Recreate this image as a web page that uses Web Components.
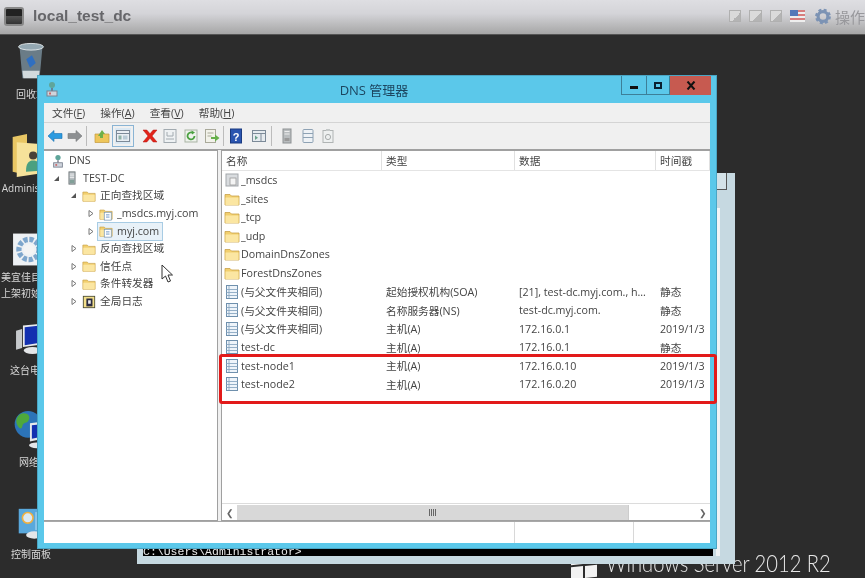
<!DOCTYPE html>
<html lang="zh-CN">
<head>
<meta charset="utf-8">
<title>local_test_dc</title>
<style>
  html, body {
    margin: 0;
    width: 865px;
    height: 578px;
    overflow: hidden;
    background: #2c2c2c;
  }
</style>
</head>
<body>
<vm-console>
  <vm-topbar slot="top" label="local_test_dc"></vm-topbar>

  <desk-icon style="left:1px;top:7px" icon="trash" h="42" label="回收站"></desk-icon>
  <desk-icon style="left:-3px;top:98px" icon="deskfolder" h="45" label="Administrator" shift="7"></desk-icon>
  <desk-icon style="left:-1px;top:197px" icon="gearbox" h="35" label="美宜佳目录&#10;上架初始化" shift="-3"></desk-icon>
  <desk-icon style="left:-1px;top:287px" icon="pc" h="38" label="这台电脑" shift="1"></desk-icon>
  <desk-icon style="left:-1px;top:375px" icon="globe" h="42" label="网络"></desk-icon>
  <desk-icon style="left:1px;top:473px" icon="panel" h="36" label="控制面板"></desk-icon>

  <server-brand></server-brand>
  <cmd-window></cmd-window>

  <dns-window>
    <dns-tree slot="tree">
      <tree-row level="0" arrow="none" icon="dns" label="DNS"></tree-row>
      <tree-row level="1" arrow="open" icon="server" label="TEST-DC"></tree-row>
      <tree-row level="2" arrow="open" icon="folder" label="正向查找区域"></tree-row>
      <tree-row level="3" arrow="closed" icon="zone" label="_msdcs.myj.com"></tree-row>
      <tree-row level="3" arrow="closed" icon="zone" label="myj.com" selected></tree-row>
      <tree-row level="2" arrow="closed" icon="folder" label="反向查找区域"></tree-row>
      <tree-row level="2" arrow="closed" icon="folder" label="信任点"></tree-row>
      <tree-row level="2" arrow="closed" icon="folder" label="条件转发器"></tree-row>
      <tree-row level="2" arrow="closed" icon="log" label="全局日志"></tree-row>
    </dns-tree>
    <record-list slot="list">
      <record-row icon="zonegray" name="_msdcs"></record-row>
      <record-row icon="folder" name="_sites"></record-row>
      <record-row icon="folder" name="_tcp"></record-row>
      <record-row icon="folder" name="_udp"></record-row>
      <record-row icon="folder" name="DomainDnsZones"></record-row>
      <record-row icon="folder" name="ForestDnsZones"></record-row>
      <record-row icon="record" name="(与父文件夹相同)" type="起始授权机构(SOA)" data="[21], test-dc.myj.com., h..." time="静态"></record-row>
      <record-row icon="record" name="(与父文件夹相同)" type="名称服务器(NS)" data="test-dc.myj.com." time="静态"></record-row>
      <record-row icon="record" name="(与父文件夹相同)" type="主机(A)" data="172.16.0.1" time="2019/1/3"></record-row>
      <record-row icon="record" name="test-dc" type="主机(A)" data="172.16.0.1" time="静态"></record-row>
      <record-row icon="record" name="test-node1" type="主机(A)" data="172.16.0.10" time="2019/1/3"></record-row>
      <record-row icon="record" name="test-node2" type="主机(A)" data="172.16.0.20" time="2019/1/3"></record-row>
    </record-list>
  </dns-window>

  <mark-box></mark-box>
  <mouse-cursor></mouse-cursor>
</vm-console>

<script>
  const FONT = '"Open Sans", "Noto Sans CJK SC", sans-serif'

  const FOLDER = `<path d="M1 3.5h5l1.5 1.5H15v9H1z" fill="#f2cf6e" stroke="#c9a24a" stroke-width=".8"/><path d="M1.5 6.5h13V14h-13z" fill="#fbe6a2"/>`
  const RECORD = `<rect x="2.5" y="1.5" width="11" height="13" fill="#eef4fa" stroke="#6f90ad"/><path d="M2.5 5.5h11M2.5 8.5h11M2.5 11.5h11M5 2v12" stroke="#8aa8c2" stroke-width=".9"/>`

  // 16x16 아이콘 모음
  const ICONS = {
    folder: FOLDER,
    record: RECORD,
    zone: `${FOLDER}<rect x="6" y="6" width="8" height="9" fill="#fff" stroke="#6f8fb0" stroke-width=".8"/><path d="M8 9h4M8 11.5h4" stroke="#5b8ac0"/>`,
    zonegray: `<rect x="2" y="2" width="12" height="12" fill="#d9dcdf" stroke="#a3a7ab"/><rect x="6" y="6" width="6" height="7" fill="#f4f4f4" stroke="#9a9a9a" stroke-width=".8"/>`,
    dns: `<circle cx="8" cy="4" r="3" fill="#5fa59a"/><path d="M8 7v3" stroke="#667" stroke-width="1.4"/><rect x="3" y="10" width="10" height="5" fill="#cfd4dc" stroke="#7a8290"/><rect x="5" y="11.5" width="2" height="2" fill="#c66"/>`,
    server: `<rect x="4.5" y="1" width="7" height="14" fill="#b6bcc0" stroke="#6e7678"/><path d="M5.5 3.5h5M5.5 5.5h5M5.5 7.5h5" stroke="#eef0f0"/><rect x="5.5" y="10" width="5" height="4" fill="#82a098"/>`,
    log: `<rect x="1.5" y="1.5" width="13" height="13" fill="#f4e08a" stroke="#4a4a30"/><rect x="5" y="4" width="7" height="9" fill="#2c2c40"/><rect x="7" y="6" width="3" height="4" fill="#eee"/>`,
    back: `<path d="M1 8l6-5.5V5.5h8v5H7v3z" fill="#2c9be0" stroke="#1a70b0" stroke-width=".6"/>`,
    forward: `<path d="M15 8L9 2.5V5.5H1v5h8v3z" fill="#8d9092" stroke="#77797b" stroke-width=".6"/>`,
    up: `<path d="M1 6h14v8.5H1z" fill="#eec65a" stroke="#c49a3c" stroke-width=".7"/><path d="M4 8l4-6 3 4H9v4H6V8z" fill="#6fb04a"/>`,
    pane: `<rect x="1.5" y="2.5" width="13" height="11" fill="#e9eef3" stroke="#7c8a98"/><path d="M1.5 5.5h13" stroke="#7c8a98"/><rect x="3.5" y="7.5" width="3" height="4" fill="#8fb2a8"/><rect x="8" y="7.5" width="4.5" height="4" fill="#b9cbd6"/>`,
    del: `<path d="M1 2h3.8L8 5.8 11.2 2H15l-5 6 5 6h-3.8L8 10.2 4.8 14H1l5-6z" fill="#e2231a" stroke="#b41610" stroke-width=".5"/>`,
    props: `<rect x="2" y="1.5" width="12" height="13" fill="#eef1f3" stroke="#a2aab0"/><path d="M5 4v4h6V4M4 11h8" stroke="#a2aab0" fill="none"/>`,
    refresh: `<rect x="2" y="2" width="12" height="12" fill="#eef2ec" stroke="#a9b3a4"/><path d="M11.5 8A3.5 3.5 0 1 1 9.5 4.8" fill="none" stroke="#4aa040" stroke-width="1.8"/><path d="M8.5 2.5l3.5 2-3 2z" fill="#4aa040"/>`,
    exportlist: `<rect x="1.5" y="1.5" width="10" height="13" fill="#f2f2ea" stroke="#a9a99a"/><path d="M3.5 5h6M3.5 8h4" stroke="#a9a99a"/><path d="M7 9h4V6.5L15.5 10 11 13.5V11H7z" fill="#66b04a"/>`,
    help: `<rect x="2.5" y="1" width="11" height="14" fill="#2b55b0" stroke="#1a3a80"/><text x="8" y="12.5" font-size="11" font-weight="700" font-family="Liberation Sans" fill="#fff" text-anchor="middle">?</text>`,
    panel2: `<rect x="1.5" y="2.5" width="13" height="11" fill="#e6ebef" stroke="#7c8a98"/><path d="M1.5 5.5h13M10 5.5v8" stroke="#7c8a98"/><path d="M4 7.5l3 2.2-3 2.2z" fill="#6aa08a"/>`,
    srvgray: `<rect x="4" y="1" width="8" height="14" fill="#b9bdbf" stroke="#8d9193"/><path d="M5.5 3.5h5M5.5 6h5" stroke="#eee"/><rect x="5.5" y="10" width="5" height="3" fill="#999"/>`,
    listgray: `<rect x="3" y="1.5" width="10" height="13" rx="1" fill="#eef2f6" stroke="#8ea2b4"/><path d="M3 5.5h10M3 9.5h10" stroke="#8ea2b4"/>`,
    docgray: `<rect x="3" y="2.5" width="10" height="12" fill="#eef0f0" stroke="#b0b4b4"/><circle cx="8" cy="9" r="2.6" fill="none" stroke="#a8acac"/><path d="M6 1h4v2H6z" fill="#c4c8c8"/>`,
    trash: `<path d="M4 5h24l-3 33H7z" fill="#7f97a6" opacity=".75"/><ellipse cx="16" cy="5" rx="13" ry="3.5" fill="#94a8b2" stroke="#dde4e6"/><path d="M11 18l6-4 4 8-6 5z" fill="#2f6fc0"/><path d="M7 30h18l-1 8H8z" fill="#d2dadd"/>`,
    deskfolder: `<path d="M2 4l14-3v40L2 38z" fill="#e8c664"/><path d="M6 9l26 2v28L6 43z" fill="#f6e29a"/><circle cx="22" cy="22" r="4" fill="#4a4038"/><path d="M15 38c0-9 3-11 7-11s7 2 7 10z" fill="#4aa080"/>`,
    gearbox: `<rect x="1" y="1" width="30" height="30" fill="#eef1f4"/><circle cx="16" cy="16" r="9.5" fill="none" stroke="#7ea6cc" stroke-width="5" stroke-dasharray="4 1.6"/><circle cx="16" cy="16" r="5" fill="#f4f4f4"/>`,
    pc: `<path d="M1 10l7-2v22l-7 2z" fill="#c6c9cc"/><path d="M9 4l22-2v24l-22 3z" fill="#e8eaec"/><path d="M11 6l18-2v20l-18 3z" fill="#1330b0"/><ellipse cx="20" cy="33" rx="10" ry="4" fill="#e4e6e8"/>`,
    globe: `<circle cx="15" cy="15" r="14" fill="#2c74b8"/><path d="M6 5c6-4 12 0 10 5s-6 2-7 7-5 1-6-3 1-7 3-9z" fill="#4ea83c"/><path d="M17 20l7-5 5 3-3 8-7 1z" fill="#58b048"/><path d="M17 14l14-2v18l-14 3z" fill="#e6e8ea"/><path d="M19 16l10-1v13l-10 2z" fill="#1330b0"/><ellipse cx="24" cy="37" rx="8" ry="3" fill="#e4e6e8"/>`,
    panel: `<rect x="1" y="1" width="30" height="30" fill="#59a8dc"/><circle cx="12" cy="12" r="6.5" fill="#dbe9f4" stroke="#f0b040" stroke-width="2"/><rect x="21" y="5" width="8" height="22" fill="#8cc4ea"/><ellipse cx="20" cy="33" rx="10" ry="4.5" fill="#e4e6e8"/>`
  }

  const icon = (name, w = 16, h = 16) => {
    const box = /trash|deskfolder|pc|globe|panel$/.test(name) ? '0 0 32 44' : name === 'gearbox' ? '0 0 32 32' : '0 0 16 16'
    return `<svg width="${w}" height="${h}" viewBox="${box}" preserveAspectRatio="xMidYMid meet">${ICONS[name]}</svg>`
  }

  class VmConsole extends HTMLElement {
    constructor() {
      super()
      this.attachShadow({ mode: 'open' })
      this.shadowRoot.innerHTML = `
        <style>
          :host {
            display: flex;
            flex-direction: column;
            width: 865px;
            height: 578px;
            font-family: ${FONT};
            overflow: hidden;
          }
          .desk {
            position: relative;
            flex: 1;
            background: #2c2c2c;
            filter: blur(.45px);
          }
        </style>
        <slot name="top"></slot>
        <div class="desk"><slot></slot></div>
      `
    }
  }

  class VmTopbar extends HTMLElement {
    constructor() {
      super()
      this.attachShadow({ mode: 'open' })
      this.shadowRoot.innerHTML = `
        <style>
          :host {
            display: flex;
            align-items: center;
            height: 35px;
            box-sizing: border-box;
            padding: 0 0 2px 4px;
            background: linear-gradient(#dedee2, #d4d4d8 40%, #a6a6a6);
            border-bottom: 1px solid #555;
            filter: blur(.5px);
          }
          .logo {
            width: 20px;
            height: 19px;
            box-sizing: border-box;
            background: linear-gradient(#222 45%, #555 45%, #333);
            border: 2px solid #888;
            border-radius: 3px;
          }
          .name {
            margin-left: 9px;
            font: 700 15.5px "Liberation Sans", sans-serif;
            color: #66666a;
          }
          .right {
            margin-left: auto;
            display: flex;
            align-items: center;
            white-space: nowrap;
            width: 136px;
            overflow: hidden;
          }
          .win {
            width: 13px;
            height: 12px;
            box-sizing: border-box;
            border: 1px solid #b0b0b0;
            background: linear-gradient(135deg, #dadada 60%, #b4b4b4 60%);
            margin-right: 8px;
          }
          .flag {
            width: 16px;
            height: 12px;
            margin-right: 10px;
            background: repeating-linear-gradient(#d67d7d 0 2px, #eee 2px 4px);
            position: relative;
          }
          .flag::before {
            content: '';
            position: absolute;
            left: 0;
            top: 0;
            width: 8px;
            height: 6px;
            background: #5578b8;
          }
          .txt {
            margin-left: 4px;
            font: 15px "Noto Sans CJK SC", sans-serif;
            color: #98989c;
          }
        </style>
        <div class="logo"></div>
        <div class="name">${this.getAttribute('label')}</div>
        <div class="right">
          <div class="win"></div>
          <div class="win"></div>
          <div class="win"></div>
          <div class="flag"></div>
          <svg width="17" height="17" viewBox="0 0 17 17">
            <circle cx="8.5" cy="8.5" r="5.2" fill="none" stroke="#7c93b4" stroke-width="3.4"/>
            <circle cx="8.5" cy="8.5" r="6.9" fill="none" stroke="#7c93b4" stroke-width="3" stroke-dasharray="3 2.4"/>
          </svg>
          <div class="txt">操作</div>
        </div>
      `
    }
  }

  class DeskIcon extends HTMLElement {
    constructor() {
      super()
      this.attachShadow({ mode: 'open' })
      this.shadowRoot.innerHTML = `
        <style>
          :host {
            position: absolute;
            display: flex;
            flex-direction: column;
            align-items: center;
            width: 60px;
            color: #d8d8d8;
          }
          svg { margin-bottom: 2px; }
          .label {
            font-size: 10px;
            line-height: 16px;
            text-align: center;
            white-space: pre;
            transform: translateX(${this.getAttribute('shift') || 0}px);
          }
        </style>
        ${icon(this.getAttribute('icon'), 34, Number(this.getAttribute('h')))}
        <div class="label">${this.getAttribute('label')}</div>
      `
    }
  }

  class ServerBrand extends HTMLElement {
    constructor() {
      super()
      this.attachShadow({ mode: 'open' })
      this.shadowRoot.innerHTML = `
        <style>
          :host {
            position: absolute;
            left: 571px;
            top: 517px;
            display: flex;
            align-items: flex-start;
            gap: 9px;
            color: #e8e8e8;
            white-space: nowrap;
          }
          .flag {
            display: grid;
            grid-template-columns: 12px 12px;
            gap: 2px;
            transform: skewY(-6deg);
          }
          .flag i { height: 12px; background: #f2f2f2; }
          .txt {
            margin-top: -4px;
            font: 300 24px Lato, sans-serif;
            transform: scaleX(.84);
            transform-origin: left;
          }
        </style>
        <div class="flag"><i></i><i></i><i></i><i></i></div>
        <div class="txt">Windows Server 2012 R2</div>
      `
    }
  }

  class CmdWindow extends HTMLElement {
    constructor() {
      super()
      this.attachShadow({ mode: 'open' })
      this.shadowRoot.innerHTML = `
        <style>
          :host {
            position: absolute;
            left: 137px;
            top: 138px;
            width: 598px;
            height: 391px;
            box-sizing: border-box;
            display: flex;
            padding: 6px 0 8px 6px;
            background: #c6d9e1;
          }
          .screen {
            flex: 1;
            display: flex;
            align-items: flex-end;
            background: #000;
            color: #e8e8e8;
            font: 11.5px/8px "Liberation Mono", monospace;
            overflow: hidden;
            white-space: nowrap;
          }
          .bar {
            position: relative;
            width: 22px;
            background: #c6d9e1;
          }
          .bar i {
            position: absolute;
            left: 3px;
            top: -6px;
            width: 11px;
            height: 17px;
            box-sizing: border-box;
            border: 1px solid #555;
            border-top: 0;
            background: #d4e2e8;
          }
          .bar b {
            position: absolute;
            left: 3px;
            right: 15px;
            bottom: 0;
            height: 348px;
            background: linear-gradient(#f4f6f7 0, #eef2f4 100%);
          }
        </style>
        <div class="screen"><span>C:\\Users\\Administrator&gt;</span></div>
        <div class="bar"><i></i><b></b></div>
      `
    }
  }

  class DnsWindow extends HTMLElement {
    constructor() {
      super()
      this.attachShadow({ mode: 'open' })
      // [아이콘, 오른쪽 여백]
      const tools = [
        ['back', 4], ['forward', 3], ['|', 7], ['up', 5], ['pane', 11, 1], ['del', 4], ['props', 5], ['refresh', 5], ['exportlist', 3], ['|', 4],
        ['help', 7], ['panel2', 4], ['|', 7], ['srvgray', 5], ['listgray', 4], ['docgray', 0]
      ]
      const bar = tools.map(t => t[0] === '|'
        ? `<i class="sep" style="margin-right:${t[1]}px"></i>`
        : `<span class="tool${t[2] ? ' on' : ''}" style="margin-right:${t[1]}px">${icon(t[0])}</span>`).join('')
      this.shadowRoot.innerHTML = `
        <style>
          :host {
            position: absolute;
            left: 38px;
            top: 41px;
            width: 678px;
            height: 472px;
            box-sizing: border-box;
            display: flex;
            flex-direction: column;
            padding: 0 6px 5px;
            background: #5bc8ea;
            box-shadow: 0 0 0 1px #4aa5c4;
            color: #444;
            font-size: 10.7px;
          }
          .title {
            position: relative;
            height: 27px;
            flex: none;
            display: flex;
            align-items: center;
            justify-content: center;
            padding-right: 6px;
            font-size: 13px;
            color: #1c4660;
          }
          .title svg {
            position: absolute;
            left: 0;
            top: 5px;
          }
          .ctrls {
            position: absolute;
            right: -1px;
            top: 0;
            height: 19px;
            display: flex;
            color: #111;
          }
          .ctrls div {
            display: flex;
            align-items: center;
            justify-content: center;
            box-sizing: border-box;
            border: 1px solid #3d7f98;
            border-top: 0;
            border-left-width: 1px;
          }
          .min { width: 26px; }
          .max { width: 23px; border-left: 0 !important; }
          .close { width: 41px; background: #c75a50; border: 0 !important; }
          .min i { width: 8px; height: 3px; background: #111; margin-top: 5px; }
          .max i { width: 8px; height: 7px; box-sizing: border-box; border: 2px solid #0a2030; }
          .close svg { position: static; }
          .menu {
            flex: none;
            height: 20px;
            box-sizing: border-box;
            padding: 0 0 1px 8px;
            display: flex;
            align-items: center;
            gap: 15px;
            background: #f0f0f0;
            border-bottom: 1px solid #d4d4d4;
          }
          .menu u { text-underline-offset: 1px; }
          .tools {
            flex: none;
            height: 26px;
            display: flex;
            align-items: center;
            padding-left: 3px;
            background: #f0f0f0;
            border-bottom: 1px solid #a0a0a0;
          }
          .tool {
            display: flex;
            width: 16px;
            height: 16px;
          }
          .tool.on {
            background: #dbe9f4;
            outline: 1px solid #8ab4d4;
            outline-offset: 2px;
          }
          .sep {
            width: 1px;
            height: 20px;
            background: #bcbcbc;
          }
          .panes {
            flex: 1;
            min-height: 0;
            display: flex;
            gap: 3px;
            background: #f0f0f0;
          }
          .status {
            flex: none;
            height: 21px;
            display: grid;
            grid-template-columns: 470px 119px 1fr;
            background: #fff;
            border-top: 1px solid #a8a8a8;
          }
          .status div + div { border-left: 1px solid #d8d8d8; }
          ::slotted([slot=tree]) { width: 174px; flex: none; }
          ::slotted([slot=list]) { flex: 1; min-width: 0; }
        </style>
        <div class="title">
          ${icon('dns')}
          <span>DNS 管理器</span>
          <div class="ctrls">
            <div class="min"><i></i></div>
            <div class="max"><i></i></div>
            <div class="close"><svg width="10" height="9" viewBox="0 0 10 9"><path d="M1.5 .5l7 8M8.5 .5l-7 8" stroke="#111" stroke-width="2"/></svg></div>
          </div>
        </div>
        <div class="menu">
          <span>文件(<u>F</u>)</span>
          <span>操作(<u>A</u>)</span>
          <span>查看(<u>V</u>)</span>
          <span>帮助(<u>H</u>)</span>
        </div>
        <div class="tools">${bar}</div>
        <div class="panes">
          <slot name="tree"></slot>
          <slot name="list"></slot>
        </div>
        <div class="status"><div></div><div></div><div></div></div>
      `
    }
  }

  class DnsTree extends HTMLElement {
    constructor() {
      super()
      this.attachShadow({ mode: 'open' })
      this.shadowRoot.innerHTML = `
        <style>
          :host {
            display: block;
            box-sizing: border-box;
            padding-top: 1px;
            background: #fff;
            border: 1px solid #a0a0a0;
            border-left: 0;
          }
        </style>
        <slot></slot>
      `
    }
  }

  class TreeRow extends HTMLElement {
    constructor() {
      super()
      this.attachShadow({ mode: 'open' })
      const level = Number(this.getAttribute('level'))
      const arrow = this.getAttribute('arrow')
      const glyph = arrow === 'open'
        ? '<path d="M7 2v5H2z" fill="#555"/>'
        : arrow === 'closed' ? '<path d="M3 1.5L7 4.5 3 7.5z" fill="#fff" stroke="#777"/>' : ''
      const pad = [4, 8, 25, 42][level]
      this.shadowRoot.innerHTML = `
        <style>
          :host {
            display: flex;
            align-items: center;
            height: 17.6px;
            padding-left: ${pad}px;
            white-space: nowrap;
          }
          .arrow { width: 9px; height: 9px; margin-right: 3px; flex: none; }
          svg.ic { flex: none; margin-right: 4px; }
          .label { padding: 0 2px 0 0; line-height: 15px; }
          :host([selected]) .wrap {
            background: #e8f1f8;
            outline: 1px solid #a8cce4;
          }
          .wrap { display: flex; align-items: center; padding: 1px; }
          :host([arrow=none]) .arrow { width: 0; margin-right: 2px; }
        </style>
        <svg class="arrow" viewBox="0 0 9 9">${glyph}</svg>
        <div class="wrap">
          ${icon(this.getAttribute('icon'), 14, 14).replace('<svg', '<svg class="ic"')}
          <span class="label">${this.getAttribute('label')}</span>
        </div>
      `
    }
  }

  class RecordList extends HTMLElement {
    constructor() {
      super()
      this.attachShadow({ mode: 'open' })
      this.shadowRoot.innerHTML = `
        <style>
          :host {
            display: flex;
            flex-direction: column;
            box-sizing: border-box;
            background: #fff;
            border: 1px solid #a0a0a0;
            border-right: 0;
            --cols: 160px 133px 141px 1fr;
          }
          .head {
            flex: none;
            height: 20px;
            box-sizing: border-box;
            display: grid;
            grid-template-columns: var(--cols);
            border-bottom: 1px solid #e4e4e4;
          }
          .head div {
            display: flex;
            align-items: center;
            padding-left: 4px;
            border-right: 1px solid #e0e0e0;
          }
          .rows { flex: 1; overflow: hidden; }
          .scroll {
            flex: none;
            height: 16px;
            display: flex;
            align-items: center;
            background: #fff;
            border-top: 1px solid #dcdcdc;
            color: #666;
          }
          .btn { width: 15px; text-align: center; font-size: 9px; line-height: 15px; }
          .track { flex: 1; display: flex; height: 15px; }
          .thumb {
            width: 391px;
            display: flex;
            align-items: center;
            justify-content: center;
            background: #d8d8d8;
            border-right: 1px solid #ccc;
          }
          .thumb i {
            width: 7px;
            height: 7px;
            background: repeating-linear-gradient(90deg, #666 0 1px, #d8d8d8 1px 2px);
          }
        </style>
        <div class="head">
          <div>名称</div><div>类型</div><div>数据</div><div>时间戳</div>
        </div>
        <div class="rows"><slot></slot></div>
        <div class="scroll">
          <span class="btn">&#10094;</span>
          <div class="track"><div class="thumb"><i></i></div></div>
          <span class="btn">&#10095;</span>
        </div>
      `
    }
  }

  class RecordRow extends HTMLElement {
    constructor() {
      super()
      this.attachShadow({ mode: 'open' })
      const attr = n => this.getAttribute(n) || ''
      this.shadowRoot.innerHTML = `
        <style>
          :host {
            display: grid;
            grid-template-columns: var(--cols);
            align-items: center;
            height: 18.55px;
            white-space: nowrap;
          }
          .first { display: flex; align-items: center; gap: 1px; padding-left: 2px; }
          .cell { padding-left: 4px; overflow: hidden; }
        </style>
        <div class="first">${icon(attr('icon'))}<span>${attr('name')}</span></div>
        <div class="cell">${attr('type')}</div>
        <div class="cell">${attr('data')}</div>
        <div class="cell">${attr('time')}</div>
      `
    }
  }

  class MarkBox extends HTMLElement {
    constructor() {
      super()
      this.attachShadow({ mode: 'open' })
      this.shadowRoot.innerHTML = `
        <style>
          :host {
            position: absolute;
            left: 219px;
            top: 319px;
            width: 498px;
            height: 50px;
            box-sizing: border-box;
            border: 3px solid #e21a1a;
            border-radius: 3px;
          }
        </style>
      `
    }
  }

  class MouseCursor extends HTMLElement {
    constructor() {
      super()
      this.attachShadow({ mode: 'open' })
      this.shadowRoot.innerHTML = `
        <style>
          :host {
            position: absolute;
            left: 161px;
            top: 229px;
            display: block;
            width: 14px;
            height: 20px;
          }
        </style>
        <svg width="14" height="20" viewBox="0 0 14 20">
          <path d="M1 1v14l3.5-3 2.5 6 2.5-1-2.5-6h4.5z" fill="#fff" stroke="#333"/>
        </svg>
      `
    }
  }

  customElements.define('vm-console', VmConsole)
  customElements.define('vm-topbar', VmTopbar)
  customElements.define('desk-icon', DeskIcon)
  customElements.define('server-brand', ServerBrand)
  customElements.define('cmd-window', CmdWindow)
  customElements.define('dns-window', DnsWindow)
  customElements.define('dns-tree', DnsTree)
  customElements.define('tree-row', TreeRow)
  customElements.define('record-list', RecordList)
  customElements.define('record-row', RecordRow)
  customElements.define('mark-box', MarkBox)
  customElements.define('mouse-cursor', MouseCursor)
</script>
</body>
</html>
